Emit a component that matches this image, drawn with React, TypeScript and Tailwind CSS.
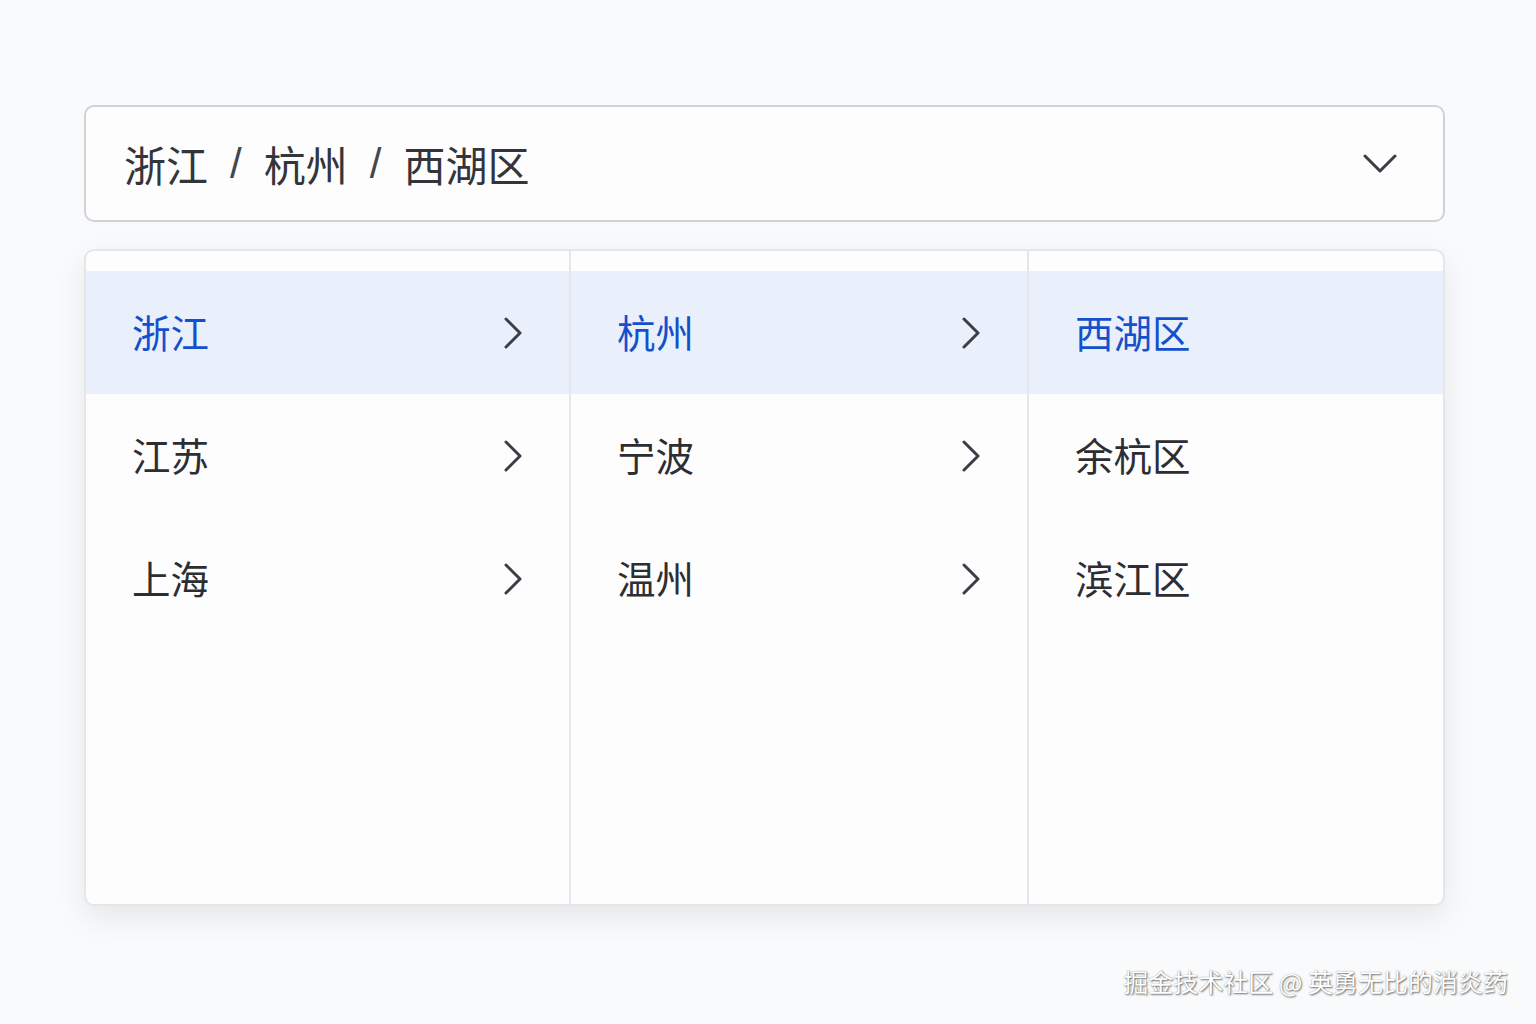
import React from "react";

const font = { fontFamily: '"Noto Sans CJK SC", "Noto Sans", sans-serif' };

function ChevronRight() {
  return (
    <svg width="20" height="32" viewBox="0 0 20 32" fill="none">
      <path d="M3 2 L17 16 L3 30" stroke="#3b3e46" strokeWidth="3" strokeLinecap="round" strokeLinejoin="round" />
    </svg>
  );
}

function ChevronDown() {
  return (
    <svg width="34" height="22" viewBox="0 0 34 22" fill="none">
      <path d="M2 3 L17 18 L32 3" stroke="#3b3e46" strokeWidth="3" strokeLinecap="round" strokeLinejoin="round" />
    </svg>
  );
}

type Item = { label: string; active?: boolean; arrow?: boolean };

function Column({ items, width, last }: { items: Item[]; width: string; last?: boolean }) {
  return (
    <div className={`${width} ${last ? "" : "border-r-2 border-[#e4e6ea]"} pt-[20px] flex flex-col`}>
      {items.map((it) => (
        <div
          key={it.label}
          className={`h-[123px] flex items-center justify-between pl-[46px] pr-[46px] ${it.active ? "bg-[#e9f0fc]" : ""}`}
        >
          <span className={`text-[38.5px] leading-none pb-[2px] ${it.active ? "text-[#1550cc]" : "text-[#2c2e33]"}`}>{it.label}</span>
          {it.arrow && <ChevronRight />}
        </div>
      ))}
    </div>
  );
}

export default function App() {
  return (
    <div className="w-[1536px] h-[1024px] bg-[#f9fafb] relative overflow-hidden" style={font}>
      <div className="pt-[105px] pl-[84px]">
        <div className="w-[1361px] h-[117px] border-2 border-[#cfd2d7] rounded-[10px] bg-[#fdfdfd] flex items-center justify-between pl-[38px] pr-[46px]">
          <div className="flex items-center gap-[22px] text-[42px] leading-none text-[#33353a]">
            <span>浙江</span>
            <span className="text-[#44474d]" style={{ fontFamily: '"Liberation Sans", sans-serif' }}>/</span>
            <span>杭州</span>
            <span className="text-[#44474d]" style={{ fontFamily: '"Liberation Sans", sans-serif' }}>/</span>
            <span>西湖区</span>
          </div>
          <ChevronDown />
        </div>
        <div className="mt-[27px] w-[1361px] h-[657px] border-2 border-[#e4e6ea] rounded-[10px] bg-[#fdfdfd] flex overflow-hidden shadow-[0_12px_30px_rgba(0,0,0,0.08)]">
          <Column
            width="w-[485px]"
            items={[
              { label: "浙江", active: true, arrow: true },
              { label: "江苏", arrow: true },
              { label: "上海", arrow: true },
            ]}
          />
          <Column
            width="w-[458px]"
            items={[
              { label: "杭州", active: true, arrow: true },
              { label: "宁波", arrow: true },
              { label: "温州", arrow: true },
            ]}
          />
          <Column
            width="flex-1"
            last
            items={[
              { label: "西湖区", active: true },
              { label: "余杭区" },
              { label: "滨江区" },
            ]}
          />
        </div>
      </div>
      <div
        className="absolute right-[28px] top-[969px] text-[25px] leading-none text-white"
        style={{ textShadow: "1px 1px 2px rgba(0,0,0,0.55), 0 0 1px rgba(0,0,0,0.4)" }}
      >
        掘金技术社区 @ 英勇无比的消炎药
      </div>
    </div>
  );
}
